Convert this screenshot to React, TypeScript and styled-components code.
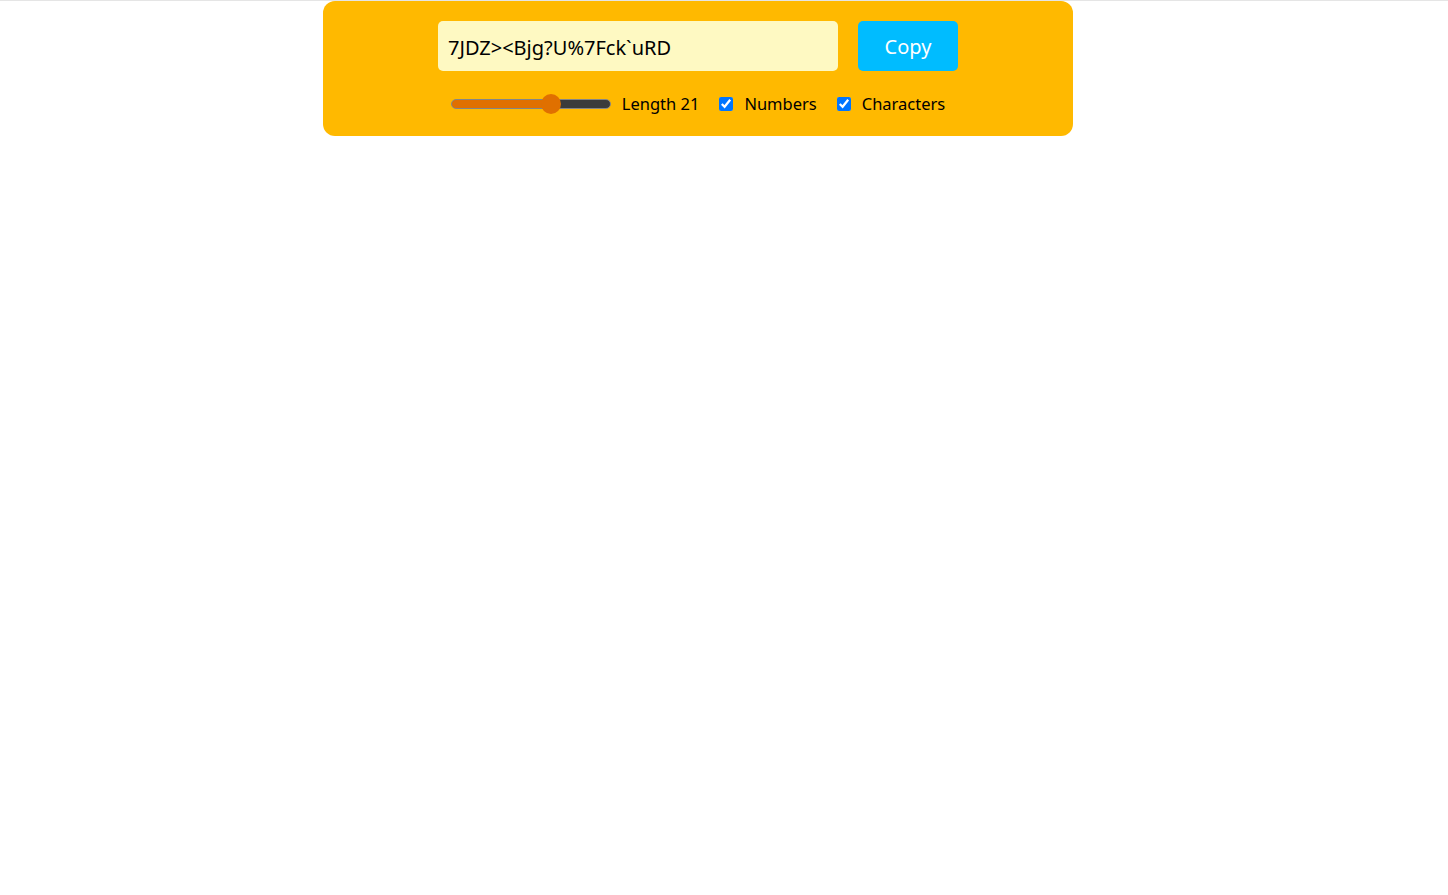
import React, { useState } from "react";
import styled, { createGlobalStyle } from "styled-components";

const GlobalStyle = createGlobalStyle`
    html, body {
        margin: 0;
        padding: 0;
        background: #ffffff;
    }
    body {
        border-top: 1px solid #e5e5e5;
        font-family: "Segoe UI", "Noto Sans", "Open Sans", sans-serif;
    }
`;

const Page = styled.div`
    max-width: 1396px;
`;

const Card = styled.div`
    width: 750px;
    margin: 0 auto;
    box-sizing: border-box;
    padding: 20px 0;
    border-radius: 12px;
    background-color: #ffb900;
    display: flex;
    flex-direction: column;
    align-items: center;
    gap: 20px;
`;

const InputRow = styled.div`
    display: flex;
    gap: 20px;
`;

const PasswordField = styled.input`
    width: 400px;
    height: 50px;
    box-sizing: border-box;
    padding: 3px 10px 0;
    border: none;
    outline: none;
    border-radius: 5px;
    background-color: #fef9c2;
    color: #000000;
    font-family: inherit;
    font-size: 20px;
`;

const CopyButton = styled.button`
    width: 100px;
    height: 50px;
    border: none;
    border-radius: 5px;
    background-color: #00bcff;
    color: #ffffff;
    font-family: inherit;
    font-size: 20px;
    cursor: pointer;
`;

const OptionsRow = styled.div`
    display: flex;
    align-items: center;
    gap: 20px;
    height: 25px;
    font-size: 16.5px;
    color: #000000;
`;

const Option = styled.label`
    display: flex;
    align-items: center;
    gap: 11px;
`;

const Slider = styled.input`
    -webkit-appearance: none;
    appearance: none;
    width: 160px;
    height: 10px;
    margin: 0;
    box-sizing: border-box;
    border: 1px solid #858585;
    border-radius: 5px;
    background: #3b3b3b;
    cursor: pointer;

    &::-webkit-slider-thumb {
        -webkit-appearance: none;
        appearance: none;
        width: 20px;
        height: 20px;
        border: none;
        border-radius: 50%;
        background: #e07000;
    }
`;

const Check = styled.input`
    width: 14px;
    height: 14px;
    margin: 0;
`;

const MIN = 1;
const MAX = 32;

const App = () => {
    const [length, setLength] = useState(21);
    const [numbers, setNumbers] = useState(true);
    const [chars, setChars] = useState(true);

    const pct = ((length - MIN) / (MAX - MIN)) * 100;
    // fill up to thumb centre (thumb 20px on a 158px inner track)
    const fillPx = 10 + (pct / 100) * 138;

    return (
        <Page>
            <GlobalStyle />
            <Card>
                <InputRow>
                    <PasswordField
                        type="text"
                        readOnly
                        value="7JDZ><Bjg?U%7Fck`uRD"
                    />
                    <CopyButton>Copy</CopyButton>
                </InputRow>
                <OptionsRow>
                    <Option>
                        <Slider
                            type="range"
                            min={MIN}
                            max={MAX}
                            value={length}
                            onChange={(e) => setLength(Number(e.target.value))}
                            style={{
                                background: `linear-gradient(to right, #e07000 ${fillPx}px, #3b3b3b ${fillPx}px)`,
                            }}
                        />
                        Length {length}
                    </Option>
                    <Option>
                        <Check
                            type="checkbox"
                            checked={numbers}
                            onChange={() => setNumbers(!numbers)}
                        />
                        Numbers
                    </Option>
                    <Option>
                        <Check
                            type="checkbox"
                            checked={chars}
                            onChange={() => setChars(!chars)}
                        />
                        Characters
                    </Option>
                </OptionsRow>
            </Card>
        </Page>
    );
};

export default App;
